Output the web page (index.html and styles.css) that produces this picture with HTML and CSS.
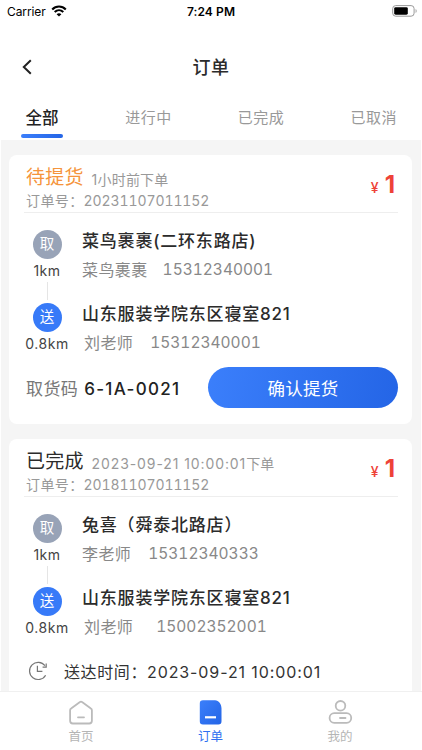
FILE: index.html
```html
<!DOCTYPE html>
<html lang="zh-CN">
<head>
    <meta charset="UTF-8">
    <title>订单</title>
    <meta name="viewport" content="width=device-width, initial-scale=1.0">
    <link rel="stylesheet" href="styles.css">
</head>
<body>
    <div class="page">
        <header class="header">
            <div class="status-bar">
                <div class="carrier">
                    <span>Carrier</span>
                    <svg width="16" height="12" viewBox="0 0 16 12">
                        <g fill="none" stroke="#000" stroke-width="2.1">
                            <path d="M1.2 4.4C5 .6 11 .6 14.8 4.4"/>
                            <path d="M3.7 7c2.5-2.4 6.1-2.4 8.6 0"/>
                        </g>
                        <path d="M8 11.6 5.6 9.2c1.4-1.2 3.4-1.2 4.8 0z"/>
                    </svg>
                </div>
                <div class="clock">7:24 PM</div>
                <div class="battery">
                    <svg width="26" height="12" viewBox="0 0 26 12">
                        <rect x=".7" y=".6" width="21.4" height="10.6" rx="3" fill="none" stroke="#999"/>
                        <rect x="2.2" y="2.2" width="13.6" height="7.5" rx="1.4"/>
                        <path d="M23.6 4v4c1.4-.6 1.4-3.4 0-4z" fill="#999"/>
                    </svg>
                </div>
            </div>
            <div class="nav">
                <svg class="back" width="12" height="18" viewBox="0 0 12 18">
                    <path d="M9.8 2.2 2.8 9l7 6.8" fill="none" stroke="#222" stroke-width="2"/>
                </svg>
                <h1 class="nav-title">订单</h1>
            </div>
            <div class="tabs">
                <div class="tab active">全部</div>
                <div class="tab">进行中</div>
                <div class="tab">已完成</div>
                <div class="tab">已取消</div>
            </div>
        </header>

        <main class="list">
            <section class="card">
                <div class="card-head">
                    <div>
                        <div class="state"><span class="state-name waiting">待提货</span><span class="state-time">1小时前下单</span></div>
                        <div class="number">订单号：<span>20231107011152</span></div>
                    </div>
                    <div class="price"><small>¥</small>1</div>
                </div>
                <div class="stop">
                    <div class="point">
                        <div class="dot">取</div>
                        <div class="distance">1km</div>
                        <div class="line"></div>
                    </div>
                    <div class="info">
                        <div class="place">菜鸟裹裹(二环东路店)</div>
                        <div class="person"><span>菜鸟裹裹</span><span class="phone">15312340001</span></div>
                    </div>
                </div>
                <div class="stop">
                    <div class="point">
                        <div class="dot send">送</div>
                        <div class="distance">0.8km</div>
                    </div>
                    <div class="info">
                        <div class="place">山东服装学院东区寝室821</div>
                        <div class="person indent"><span>刘老师</span><span class="phone wide">15312340001</span></div>
                    </div>
                </div>
                <div class="card-foot">
                    <div class="code">取货码<b>6-1A-0021</b></div>
                    <button class="confirm" type="button">确认提货</button>
                </div>
            </section>

            <section class="card">
                <div class="card-head">
                    <div>
                        <div class="state"><span class="state-name">已完成</span><span class="state-time"><span class="date">2023-09-21 10:00:01</span>下单</span></div>
                        <div class="number">订单号：<span>20181107011152</span></div>
                    </div>
                    <div class="price"><small>¥</small>1</div>
                </div>
                <div class="stop">
                    <div class="point">
                        <div class="dot">取</div>
                        <div class="distance">1km</div>
                        <div class="line"></div>
                    </div>
                    <div class="info">
                        <div class="place">兔喜（舜泰北路店）</div>
                        <div class="person"><span>李老师</span><span class="phone wide">15312340333</span></div>
                    </div>
                </div>
                <div class="stop">
                    <div class="point">
                        <div class="dot send">送</div>
                        <div class="distance">0.8km</div>
                    </div>
                    <div class="info">
                        <div class="place">山东服装学院东区寝室821</div>
                        <div class="person indent"><span>刘老师</span><span class="phone wider">15002352001</span></div>
                    </div>
                </div>
                <div class="arrived">
                    <svg width="20" height="20" viewBox="0 0 20 20" fill="none" stroke="#777" stroke-width="1.2">
                        <path d="M17.6 14.2A8.6 8.6 0 1 1 17 4.7"/>
                        <path d="M18.2 2.6v3.6h-3.6M9.4 4.8v5.6h5"/>
                    </svg>
                    <div>送达时间：<span class="date">2023-09-21 10:00:01</span></div>
                </div>
            </section>
        </main>

        <nav class="tabbar">
            <div class="tabbar-item">
                <svg width="26" height="26" viewBox="0 0 26 26" fill="none" stroke="#bbb" stroke-width="1.8" stroke-linejoin="round" stroke-linecap="round">
                    <path d="M2.1 10.2c0-.8.4-1.4 1-1.8l8.5-6.2c.8-.6 2-.6 2.8 0l8.5 6.2c.6.4 1 1 1 1.8v10.6c0 1.7-1 2.7-2.7 2.7H4.8c-1.7 0-2.7-1-2.7-2.7z"/>
                    <path d="M10 17.3h6"/>
                </svg>
                <span>首页</span>
            </div>
            <div class="tabbar-item current">
                <svg width="26" height="26" viewBox="0 0 26 26">
                    <defs>
                        <linearGradient id="blue" x1="0" x2="1" y2="1">
                            <stop offset="0" stop-color="#3b7ffb"/>
                            <stop offset="1" stop-color="#2465e6"/>
                        </linearGradient>
                    </defs>
                    <path d="M5 .3h12c3.800 0 6.500 3.700 6.500 8.200v12.700c0 2.200-1 3.300-3.200 3.300H5c-2.200 0-3.200-1.100-3.200-3.300V3.500c0-2.200 1-3.200 3.200-3.200z" fill="url(#blue)"/>
                    <path d="M7 17.300h11" stroke="#fff" stroke-width="2.200"/>
                </svg>
                <span>订单</span>
            </div>
            <div class="tabbar-item">
                <svg width="26" height="26" viewBox="0 0 26 26" fill="none" stroke="#bbb" stroke-width="1.8">
                    <circle cx="13.500" cy="5.800" r="4.800"/>
                    <rect x="2.600" y="13.200" width="21.600" height="9.600" rx="4.600"/>
                    <path d="M13 18h5.500" stroke-linecap="round"/>
                </svg>
                <span>我的</span>
            </div>
        </nav>
    </div>
</body>
</html>
```

FILE: styles.css
```css
* {
    box-sizing: border-box;
}

body {
    margin: 0;
    font-family: Inter, "Noto Sans CJK SC", sans-serif;
    background-color: #fff;
    color: #2b2b2b;
}

.page {
    display: flex;
    flex-direction: column;
    width: 422px;
    height: 750px;
    overflow: hidden;
    white-space: nowrap;
}

.header {
    height: 140px;
    flex: none;
}

/* Status bar */
.status-bar {
    display: grid;
    grid-template-columns: 1fr auto 1fr;
    align-items: center;
    height: 22px;
    padding: 0 4px 0 7px;
    font-size: 12px;
    color: #000;
}

.carrier {
    display: flex;
    align-items: center;
    gap: 5px;
    letter-spacing: -0.1px;
}

.clock {
    margin-right: 3px;
    font-weight: 600;
    letter-spacing: 0.1px;
}

.battery {
    display: flex;
    justify-content: flex-end;
}

/* Title */
.nav {
    display: grid;
    grid-template-columns: 12px 1fr 12px;
    align-items: center;
    height: 46px;
    margin-top: 22px;
    padding: 0 21px;
}

.nav-title {
    margin: -2px 0 0;
    text-align: center;
    font-size: 18px;
    font-weight: 500;
    letter-spacing: 0.6px;
}

/* Tabs */
.tabs {
    display: flex;
    justify-content: space-between;
    height: 49px;
    margin-top: 5px;
    padding: 0 25px 0 21px;
}

.tab {
    line-height: 46px;
    font-size: 15px;
    letter-spacing: 0.5px;
    color: #999;
}

.tab.active {
    width: 42px;
    margin-right: -4px;
    text-align: center;
    font-size: 16.5px;
    font-weight: 500;
    letter-spacing: 0;
    color: #222;
}

.tab.active::after {
    content: "";
    display: block;
    height: 4px;
    margin-top: -7px;
    border-radius: 2px;
    background: linear-gradient(90deg, #3b7ffb, #2465e6);
}

/* Orders */
.list {
    flex: 1;
    min-height: 0;
    overflow: hidden;
    margin: 0 1px;
    padding: 15px 9px 0 8px;
    background-color: #f5f5f5;
}

.card {
    margin-bottom: 15px;
    padding: 10px 14px 16px 15px;
    border-radius: 8px;
    background-color: #fff;
}

.card-head {
    display: flex;
    justify-content: space-between;
    height: 48px;
    margin-bottom: 17px;
    padding: 0 3px 0 2px;
    border-bottom: 1px solid #eee;
}

.state {
    display: flex;
    align-items: center;
    gap: 8px;
    height: 26px;
}

.state-name {
    font-size: 19px;
    line-height: 26px;
    letter-spacing: 0.2px;
}

.waiting {
    color: #f5943c;
}

.state-time {
    padding-top: 3px;
    font-size: 14px;
    line-height: 23px;
    letter-spacing: 0.2px;
    color: #999;
}

.date {
    letter-spacing: 0.9px;
}

.number {
    font-size: 14px;
    line-height: 20px;
    letter-spacing: 0.4px;
    color: #999;
}

.number span {
    font-variant-numeric: tabular-nums;
    letter-spacing: -0.1px;
}

.price {
    padding-top: 4px;
    font-size: 24px;
    font-weight: 700;
    line-height: 31px;
    color: #ee4238;
}

.price small {
    margin-right: 6px;
    font-size: 14px;
    font-weight: 500;
}

.stop {
    display: flex;
    height: 72.5px;
}

.point {
    display: flex;
    flex-direction: column;
    align-items: center;
    width: 46px;
    margin-right: 12px;
}

.dot {
    width: 29px;
    height: 29px;
    border-radius: 50%;
    background-color: #98a3b7;
    color: #fff;
    font-size: 14.5px;
    line-height: 28px;
    text-align: center;
}

.dot.send {
    background-color: #377af8;
}

.distance {
    margin-top: 1px;
    font-size: 14px;
    line-height: 22px;
    letter-spacing: 0.5px;
    color: #444;
}

.line {
    width: 1px;
    height: 18px;
    background-color: #e5e5e5;
}

.place {
    font-size: 17px;
    font-weight: 500;
    line-height: 23px;
    letter-spacing: 0.8px;
}

.person {
    display: flex;
    margin-top: 6px;
    font-size: 16px;
    line-height: 22px;
    letter-spacing: 0.4px;
    color: #888;
}

.person.indent {
    padding-left: 2px;
}

.phone {
    margin-left: 15px;
    font-size: 15.5px;
    font-variant-numeric: tabular-nums;
    letter-spacing: 0;
}

.phone.wide {
    margin-left: 17px;
}

.phone.wider {
    margin-left: 23px;
}

.card-foot {
    display: flex;
    align-items: center;
    justify-content: space-between;
    margin-top: -8px;
    padding-left: 2px;
}

.code {
    font-size: 17px;
    letter-spacing: 0.4px;
    color: #777;
}

.code b {
    margin-left: 6px;
    font-weight: 500;
    letter-spacing: 1.3px;
    color: #222;
}

.confirm {
    width: 190px;
    height: 41px;
    padding: 0;
    border: none;
    border-radius: 21px;
    background: linear-gradient(100deg, #3b7ffb, #2465e6);
    color: #fff;
    font-family: inherit;
    font-size: 17.5px;
    letter-spacing: 0.3px;
}

.arrived {
    display: flex;
    align-items: center;
    gap: 16px;
    height: 30px;
    margin-top: -3px;
    padding-left: 4px;
    font-size: 16px;
    letter-spacing: 0.6px;
    color: #333;
}

/* Bottom bar */
.tabbar {
    display: flex;
    flex: none;
    justify-content: space-between;
    height: 59px;
    padding: 8px 69px 0 68px;
    border-top: 1px solid #f0f0f0;
    background-color: #fff;
}

.tabbar-item {
    display: flex;
    flex-direction: column;
    align-items: center;
    font-size: 12.5px;
    line-height: 22px;
    color: #b5b5b5;
}

.current {
    color: #2f70f0;
}
```
